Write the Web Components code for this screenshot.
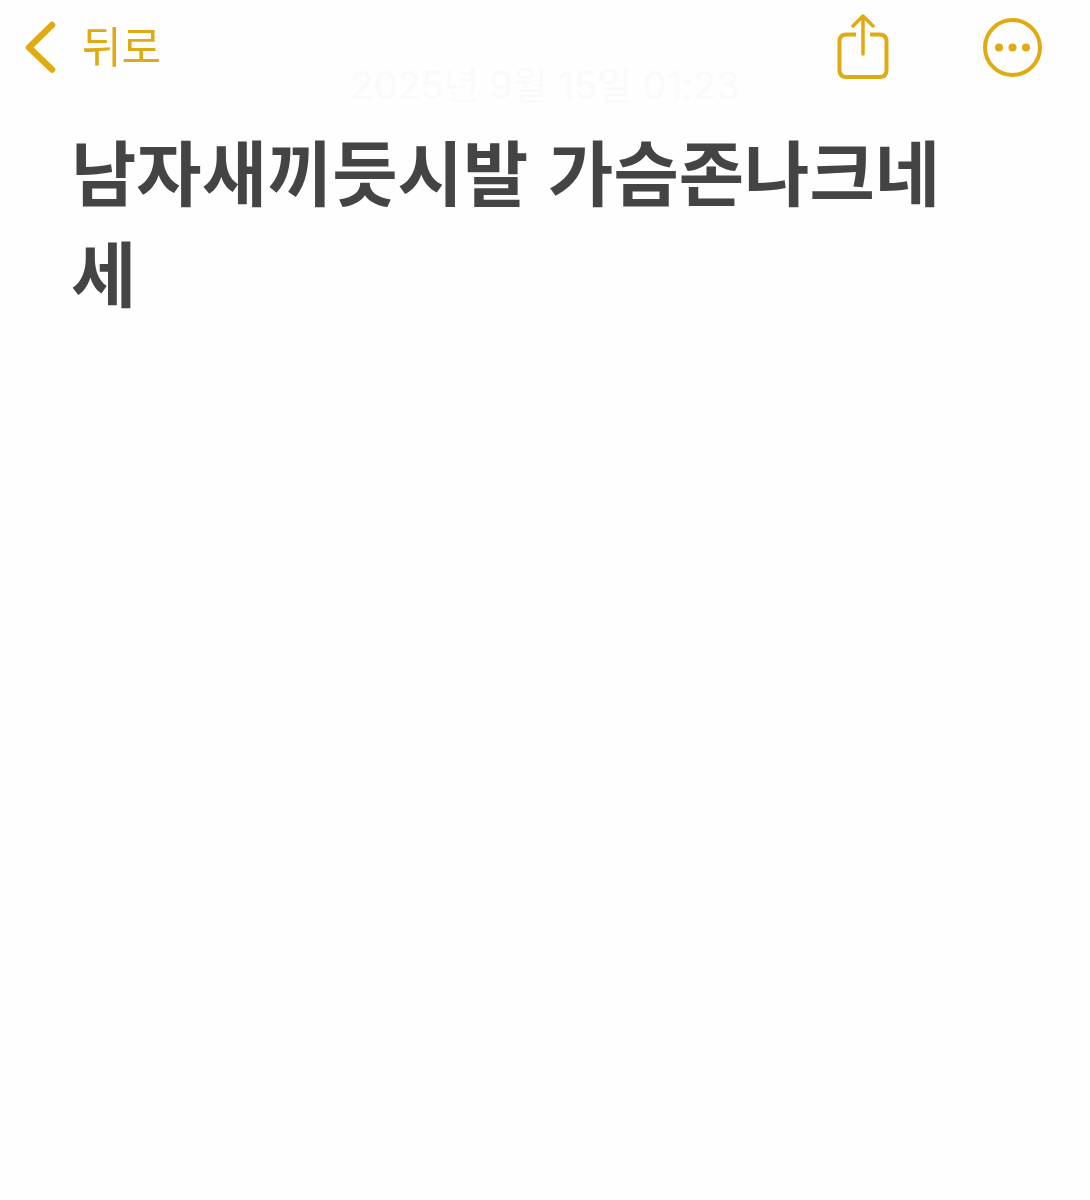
<!DOCTYPE html>
<html lang="ko">
<head>
<meta charset="utf-8">
<meta name="viewport" content="width=device-width, initial-scale=1">
<title>메모</title>
<style>
    body{
        margin: 0;
        background: #fefefe;
        font-family: Inter, "Noto Sans CJK KR", sans-serif;
    }
</style>
</head>
<body>
<template id="note-bar">
    <style>
        :host{
            display: block;
            position: fixed;
            top: 0;
            left: 0;
            right: 0;
            color: #e0ab12;
        }
        header{
            display: flex;
            align-items: center;
            justify-content: space-between;
            height: 94px;
            padding: 0 48px 0 24px;
        }
        nav{
            display: flex;
            align-items: center;
            gap: 92px;
        }
    </style>
    <header>
        <slot name="back"></slot>
        <nav><slot></slot></nav>
    </header>
</template>

<template id="note-button">
    <style>
        :host{
            display: block;
        }
        button{
            display: flex;
            align-items: center;
            gap: 26px;
            margin: 0;
            padding: 0;
            border: 0;
            background: none;
            color: inherit;
            font: 400 43px/64px "Noto Sans CJK KR", sans-serif;
            cursor: pointer;
        }
        span{
            padding-bottom: 6px;
        }
        svg{
            display: block;
            fill: none;
            stroke: currentColor;
            stroke-linecap: round;
            stroke-linejoin: round;
        }
        .dots{
            fill: currentColor;
            stroke: none;
        }
    </style>
    <button type="button"></button>
</template>

<template id="note-page">
    <style>
        :host{
            display: block;
            padding: 60px 71px;
        }
        time{
            display: block;
            text-align: center;
            color: #fafafb;
            font-size: 38px;
            line-height: 50px;
        }
        h1{
            margin: 9px 0 0;
            padding-right: 24px;
            color: #444;
            font: 700 71px/101px "Noto Sans CJK KR", sans-serif;
            word-break: break-all;
        }
    </style>
    <time><slot name="date"></slot></time>
    <h1><slot></slot></h1>
</template>

<note-bar>
    <note-button slot="back" icon="back">뒤로</note-button>
    <note-button icon="share" label="공유"></note-button>
    <note-button icon="more" label="더 보기"></note-button>
</note-bar>
<note-page>
    <span slot="date">2025년 9월 15일 01:23</span>
    남자새끼듯시발 가슴존나크네세
</note-page>

<script>
    const icons = {
        back: `<svg width="32" height="52" viewBox="0 0 32 52" stroke-width="6.500" aria-hidden="true">
            <path d="M28 4L5 26.500L28 48.500"/></svg>`,
        share: `<svg width="54" height="66" viewBox="0 0 54 66" stroke-width="4" aria-hidden="true">
            <path stroke-linecap="butt" d="M20 20.500H10.500Q3.500 20.500 3.500 27.500V56Q3.500 63 10.500 63H43.500Q50.500 63 50.500 56V27.500Q50.500 20.500 43.500 20.500H34"/>
            <path d="M27 40V3M17 12L27 2L37 12" stroke-width="3.500"/></svg>`,
        more: `<svg width="60" height="60" viewBox="0 0 60 60" stroke-width="4" aria-hidden="true">
            <circle cx="30.500" cy="30.500" r="27.500"/>
            <g class="dots"><circle cx="17" cy="30.500" r="4"/><circle cx="30.500" cy="30.500" r="4"/><circle cx="44" cy="30.500" r="4"/></g></svg>`
    }

    class NoteElement extends HTMLElement {
        constructor(){
            super()
            const template = document.getElementById(this.localName).content
            this.attachShadow({ mode: 'open' }).appendChild(template.cloneNode(true))
        }
    }

    class NoteBar extends NoteElement {}

    class NoteButton extends NoteElement {
        connectedCallback(){
            const button = this.shadowRoot.querySelector('button')
            button.innerHTML = icons[this.getAttribute('icon')]
            if(this.hasAttribute('label')){
                button.setAttribute('aria-label', this.getAttribute('label'))
            } else {
                button.insertAdjacentHTML('beforeend', '<span><slot></slot></span>')
            }
        }
    }

    class NotePage extends NoteElement {}

    customElements.define('note-bar', NoteBar)
    customElements.define('note-button', NoteButton)
    customElements.define('note-page', NotePage)
</script>
</body>
</html>
